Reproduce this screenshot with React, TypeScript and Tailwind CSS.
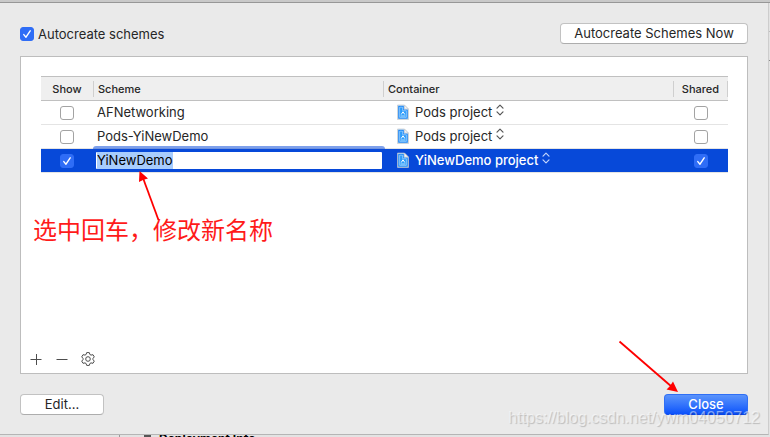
import { useEffect, useRef, useState } from 'react';

type Scheme = {
  id: number;
  name: string;
  container: string;
  show: boolean;
  shared: boolean;
};

const initialSchemes: Scheme[] = [
  { id: 1, name: 'AFNetworking', container: 'Pods project', show: false, shared: false },
  { id: 2, name: 'Pods-YiNewDemo', container: 'Pods project', show: false, shared: false },
  { id: 3, name: 'YiNewDemo', container: 'YiNewDemo project', show: true, shared: true },
];

type CheckboxProps = {
  id?: string;
  label?: string;
  checked: boolean;
  onChange: (checked: boolean) => void;
};

function Checkbox({ id, label, checked, onChange }: CheckboxProps) {
  return (
    <span className="relative block h-[14px] w-[14px] shrink-0">
      <input
        id={id}
        type="checkbox"
        aria-label={label}
        checked={checked}
        onChange={e => onChange(e.target.checked)}
        className="block h-[14px] w-[14px] appearance-none rounded-[3px] border border-[#a3a3a3] bg-white checked:border-[#2f6df6] checked:bg-[#2f6df6]"
      />
      {checked && (
        <svg viewBox="0 0 14 14" className="pointer-events-none absolute inset-0 h-[14px] w-[14px]" aria-hidden="true">
          <path d="M3.8 7.6 6 10.2 10.2 3.8" fill="none" stroke="#fff" strokeWidth="1.4" strokeLinecap="round" strokeLinejoin="round" />
        </svg>
      )}
    </span>
  );
}

function ProjectIcon() {
  return (
    <svg viewBox="0 0 12 16" className="h-4 w-3 shrink-0" aria-hidden="true">
      <path d="M.5 1h7l4 4v10.500H.5z" fill="#e3e9ee" stroke="#b9c1c8" strokeWidth=".6" />
      <path d="M1.200 1.800h5.600v3.700h4v9.300H1.200z" fill="#1c86f5" />
      <path d="M2.600 3.200h3v3.500h3.800v6.700H2.600z" fill="#2c9cfb" stroke="#a9d9ff" strokeWidth=".7" />
      <path d="M7.500 1.300v3.700h3.700z" fill="#f4f4f4" stroke="#b4bdc6" strokeWidth=".5" />
      <path d="M4.200 10.500 6 7.800l1.800 2.700" fill="none" stroke="#fff" strokeWidth="1" />
      <path d="M3.500 12h5" stroke="#d5edff" strokeWidth=".8" />
    </svg>
  );
}

function UpDownIcon({ selected }: { selected: boolean }) {
  return (
    <svg viewBox="0 0 8 12" className="pointer-events-none mb-1 h-3 w-2 shrink-0" aria-hidden="true">
      <path
        d="M1 4.200 4 1.200l3 3M1 7.800l3 3 3-3"
        fill="none"
        stroke={selected ? '#c3d5fb' : '#555'}
        strokeWidth="1.200"
        strokeLinecap="round"
        strokeLinejoin="round"
      />
    </svg>
  );
}

export default function App() {
  const [autocreate, setAutocreate] = useState(true);
  const [schemes, setSchemes] = useState(initialSchemes);
  const nameRef = useRef<HTMLInputElement>(null);
  const selectedId = 3;

  useEffect(() => {
    nameRef.current?.focus();
    nameRef.current?.select();
  }, []);

  const update = (id: number, patch: Partial<Scheme>) =>
    setSchemes(list => list.map(s => (s.id === id ? { ...s, ...patch } : s)));

  return (
    <div className="relative flex min-h-screen flex-col overflow-hidden bg-[#e3e3e3] font-['Inter',sans-serif] text-[13px] leading-4 text-[#262626]">
      <div className="h-[3px] border-b border-[#979797] bg-[#c9c9c9]" />

      <div className="flex flex-1">
        <main className="flex flex-1 flex-col border-r border-b border-r-[#cdcdcd] border-b-[#b5b5b5] bg-[#eaeaea] px-5 pt-5 pb-[19px]">
          <div className="flex items-center justify-between">
            <div className="flex items-center gap-1">
              <Checkbox id="autocreate" checked={autocreate} onChange={setAutocreate} />
              <label htmlFor="autocreate">Autocreate schemes</label>
            </div>
            <button type="button" className="h-[21px] w-[188px] rounded-[4px] border border-[#c2c2c2] border-b-[#adadad] bg-white leading-[19px]">
              Autocreate Schemes Now
            </button>
          </div>

          <section className="mt-3 flex flex-1 flex-col border border-[#bdbdbd] bg-white">
            <div className="pt-[19px] pr-[19px] pl-5">
              <table className="w-full table-fixed border-separate border-spacing-0">
                <colgroup>
                  <col className="w-[53px]" />
                  <col className="w-[290px]" />
                  <col />
                  <col className="w-[54px]" />
                </colgroup>
                <thead>
                  <tr className="h-[25px] text-left text-[11px] [&>th]:border-y [&>th]:border-[#c0c0c0] [&>th]:bg-[#efefef] [&>th]:p-0 [&>th]:font-medium">
                    <th><div className="border-r border-[#cfcfcf] text-center">Show</div></th>
                    <th><div className="border-r border-[#cfcfcf] pl-1">Scheme</div></th>
                    <th><div className="border-r border-[#cfcfcf] pl-1">Container</div></th>
                    <th><div className="border-r border-[#cfcfcf] text-center">Shared</div></th>
                  </tr>
                </thead>
                <tbody>
                  {schemes.map(s => {
                    const selected = s.id === selectedId;
                    return (
                      <tr
                        key={s.id}
                        className={
                          selected
                            ? 'h-6 font-medium text-white [&>td]:border-b [&>td]:border-[#e4e4e4] [&>td]:bg-[#0749d9] [&>td]:bg-clip-padding [&>td]:p-0'
                            : 'h-6 [&>td]:border-b [&>td]:border-[#e4e4e4] [&>td]:p-0'
                        }
                      >
                        <td>
                          <div className="flex pl-[19px]">
                            <Checkbox label={`Show ${s.name}`} checked={s.show} onChange={v => update(s.id, { show: v })} />
                          </div>
                        </td>
                        <td>
                          {selected ? (
                            <div className="px-[2px]">
                              <input
                                ref={nameRef}
                                aria-label="Scheme name"
                                value={s.name}
                                onChange={e => update(s.id, { name: e.target.value })}
                                className="block h-[17px] w-full rounded-[1px] bg-white px-[1px] font-normal leading-[17px] text-black shadow-[0_-3px_0_3px_rgba(7,73,217,0.52)] outline-none selection:bg-[#a8cdfd] selection:text-black"
                              />
                            </div>
                          ) : (
                            <div className="pb-[2px] pl-[3px]">{s.name}</div>
                          )}
                        </td>
                        <td>
                          <div className="flex items-center pb-[2px] pl-[13px]">
                            <ProjectIcon />
                            <select
                              aria-label={`Container of ${s.name}`}
                              className="mr-[3px] ml-[6px] h-4 appearance-none bg-transparent p-0"
                              defaultValue={s.container}
                            >
                              <option>{s.container}</option>
                            </select>
                            <UpDownIcon selected={selected} />
                          </div>
                        </td>
                        <td>
                          <div className="flex justify-center">
                            <Checkbox label={`Share ${s.name}`} checked={s.shared} onChange={v => update(s.id, { shared: v })} />
                          </div>
                        </td>
                      </tr>
                    );
                  })}
                </tbody>
              </table>
            </div>

            <div className="mt-auto flex items-center gap-3 px-2 pb-[7px] text-[#4d4d4d]">
              <button type="button" aria-label="Add scheme">
                <svg viewBox="0 0 14 14" className="h-[14px] w-[14px]" fill="none" stroke="currentColor">
                  <path d="M1.500 7.500h11M7.500 2v11" />
                </svg>
              </button>
              <button type="button" aria-label="Remove scheme">
                <svg viewBox="0 0 14 14" className="h-[14px] w-[14px]" fill="none" stroke="currentColor">
                  <path d="M1.500 7.500h11" />
                </svg>
              </button>
              <button type="button" aria-label="Scheme actions">
                <svg viewBox="0 0 14 14" className="h-[14px] w-[14px]" fill="none" stroke="currentColor" strokeLinejoin="round">
                  <path d="M5.700.6h2.600l.6 1.900 1.100.6 2-.4 1.300 2.200L12 6.300v1.400l1.300 1.400-1.300 2.200-2-.4-1.100.6-.6 1.900H5.700l-.6-1.900-1.100-.6-2 .4L.7 9.100 2 7.700V6.300L.7 4.900 2 2.700l2 .4 1.100-.6z" />
                  <circle cx="7" cy="7" r="2.300" />
                </svg>
              </button>
            </div>
          </section>

          <footer className="mt-5 flex justify-between">
            <button type="button" className="h-[21px] w-[84px] rounded-[4px] border border-[#c2c2c2] border-b-[#adadad] bg-white leading-[19px]">
              Edit...
            </button>
            <button type="button" className="h-[21px] w-[84px] rounded-[4px] border border-[#2f6ff5] border-b-[#0a45e8] bg-linear-to-b from-[#5a93fb] to-[#0a50fb] font-medium leading-[19px] text-white">
              Close
            </button>
          </footer>
        </main>

        {/* editor window edge to the right of the sheet */}
        <div className="flex w-px flex-col">
          <div className="h-[29px] border-b border-[#bdbdbd]" />
          <div className="h-[29px] border-b border-[#8a8a8a]" />
        </div>
      </div>

      {/* sliver of the editor window under the sheet */}
      <div className="flex h-[2px] overflow-hidden bg-[#e3e3e3] font-bold text-black">
        <span className="ml-[119px] h-[2px] w-px bg-[#999]" />
        <span className="ml-6 h-[2px] w-[7px] bg-[#555]" />
        <span className="-mt-1 ml-2 text-[12px]">Deployment Info</span>
      </div>

      <p className="pointer-events-none absolute top-[214px] left-[33px] font-['Noto_Sans_CJK_SC',sans-serif] text-[24px] leading-[30px] font-normal text-[#ff1a1a]">
        选中回车，修改新名称
      </p>
      <svg className="pointer-events-none absolute top-[170px] left-[134px] h-[52px] w-[28px]" viewBox="0 0 28 52" aria-hidden="true">
        <path d="M24.500 50 9 8" stroke="#fe0000" strokeWidth="1.800" />
        <path d="M5.500 1 5 12l4.500-2.200 4.500-1.300z" fill="#fe0000" />
      </svg>
      <svg className="pointer-events-none absolute top-[340px] right-[90px] h-[54px] w-[62px]" viewBox="0 0 62 54" aria-hidden="true">
        <path d="M1.500 1.500 54 47" stroke="#fe0000" strokeWidth="1.800" />
        <path d="M60 52 48.500 49.500l3.500-3.500L55 41.500z" fill="#fe0000" />
      </svg>
      <p className="pointer-events-none absolute right-[10px] bottom-[9px] font-['Liberation_Sans',sans-serif] text-[16px] leading-5 text-white/50 [text-shadow:1px_1px_1px_rgba(0,0,0,0.2)]">
        https://blog.csdn.net/ywm04050712
      </p>
    </div>
  );
}
